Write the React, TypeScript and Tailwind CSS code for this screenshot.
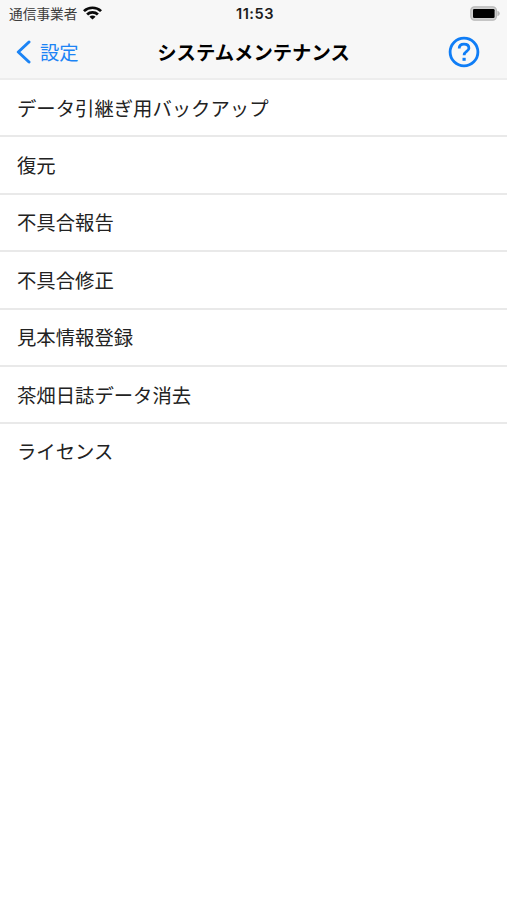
const MENU_ITEMS = [
  'データ引継ぎ用バックアップ',
  '復元',
  '不具合報告',
  '不具合修正',
  '見本情報登録',
  '茶畑日誌データ消去',
  'ライセンス',
]

function WifiIcon() {
  return (
    <svg className="-mt-px" width="19" height="14" viewBox="0 0 18 14" preserveAspectRatio="none" fill="none" stroke="#0a0a0a" strokeWidth="2.6">
      <path d="M0.9 5.1C5.4 0.7 12.6 0.7 17.1 5.1" />
      <path d="M3.9 8.5C6.7 5.7 11.3 5.7 14.1 8.5" />
      <path d="M9 13.6L6.1 10.7C7.7 9.2 10.3 9.2 11.9 10.7Z" fill="#0a0a0a" stroke="none" />
    </svg>
  )
}

function BatteryIcon() {
  return (
    <svg width="31" height="15" viewBox="0 0 31 15" fill="none">
      <rect x="0.8" y="0.8" width="25.6" height="13.4" rx="3.6" fill="#d0d0d0" stroke="#b8b8b8" strokeWidth="1.2" />
      <rect x="3" y="3" width="21.6" height="9" rx="1.2" fill="#000" />
      <path d="M27.4 4.8C30.6 5.8 30.6 9.2 27.4 10.2Z" fill="#b8b8b8" />
    </svg>
  )
}

function StatusBar() {
  return (
    <div className="grid grid-cols-3 items-center h-[27px] pl-[9px] pr-[6px] text-[13.7px] leading-none">
      <div className="flex items-center gap-[6px] text-[#3c3c3c]">
        <span>通信事業者</span>
        <WifiIcon />
      </div>
      <time className="pt-px text-center font-['Inter'] font-semibold text-[14.6px] tracking-[0.5px] text-[#1c1c1c]">11:53</time>
      <div className="flex justify-end">
        <BatteryIcon />
      </div>
    </div>
  )
}

function NavBar() {
  return (
    <div className="grid grid-cols-[1fr_auto_1fr] items-center h-[51px] px-[16px] pb-px text-[19.35px] leading-none">
      <button className="flex items-center gap-[9px] text-[#1c84f5]">
        <svg width="15" height="24" viewBox="0 0 15 24" fill="none" stroke="currentColor" strokeWidth="3" strokeLinecap="round" strokeLinejoin="round">
          <path d="M13 2L2.3 12L13 22" />
        </svg>
        <span className="pt-px">設定</span>
      </button>
      <h1 className="pt-px font-bold text-black">システムメンテナンス</h1>
      <button className="justify-self-end mr-[11px] text-[#0f7df6]">
        <svg width="32" height="32" viewBox="0 0 32 32" fill="none" stroke="currentColor" strokeWidth="2.8">
          <circle cx="16" cy="16" r="13.9" />
          <path d="M11.2 12.6C11.2 9.7 13.2 8.2 16 8.2C18.9 8.2 20.9 9.7 20.9 12.2C20.9 15.5 16.1 15.4 16.1 19.2" />
          <path d="M16.1 21.8V24.8" strokeWidth="3.2" />
        </svg>
      </button>
    </div>
  )
}

export default function App() {
  return (
    <div className="min-h-screen bg-white font-['Noto_Sans_CJK_JP',sans-serif]">
      <header className="bg-[#f7f7f7] border-b-2 border-[#ededed]">
        <StatusBar />
        <NavBar />
      </header>
      <ul>
        {MENU_ITEMS.map(item => (
          <li
            key={item}
            className="flex items-center h-[57.42px] pl-[17px] pt-[1.2px] last:pt-0 last:pb-[2px] border-b-2 border-[#e9e9e9] last:border-b-0 text-[19.35px] leading-none text-[#222]"
          >
            {item}
          </li>
        ))}
      </ul>
    </div>
  )
}
